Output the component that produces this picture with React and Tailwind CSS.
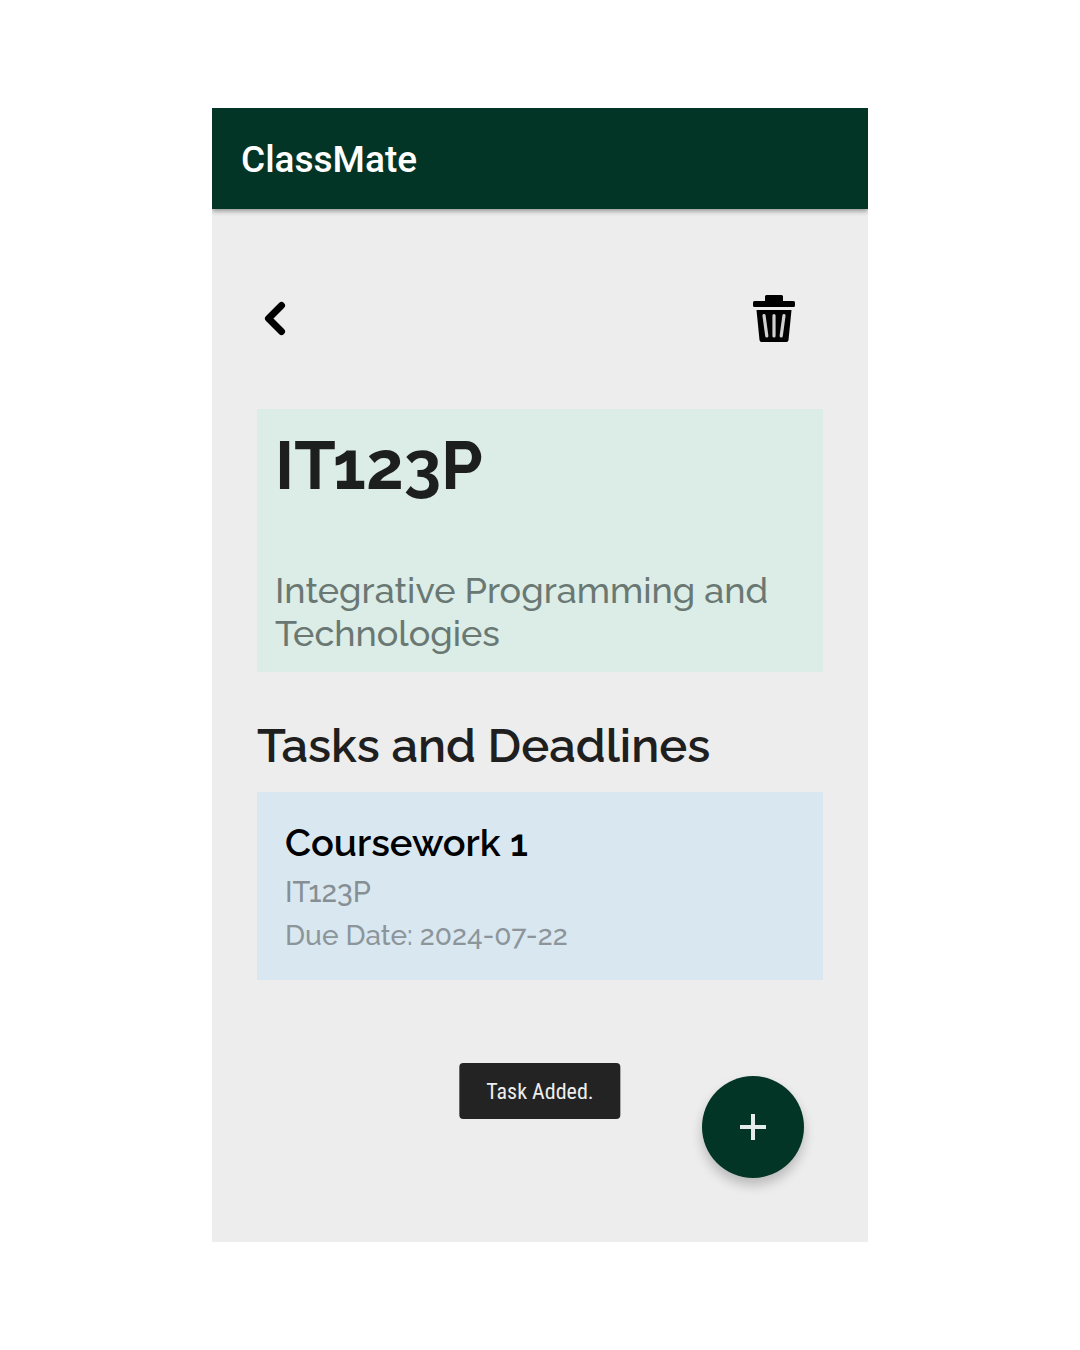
const tasks = [
  { title: "Coursework 1", course: "IT123P", due: "2024-07-22" },
];

function BackIcon() {
  return (
    <svg viewBox="0 0 24 36" className="h-9 w-6" fill="none" aria-hidden="true">
      <path d="M18.500 5.500 5.500 18.500 18.500 31.500" stroke="#000" strokeWidth="7" strokeLinecap="round" strokeLinejoin="round" />
    </svg>
  );
}

function TrashIcon() {
  return (
    <svg viewBox="0 0 44 50" className="h-[50px] w-11" aria-hidden="true">
      <path d="M13 3.500q0-1.500 1.500-1.500h15q1.500 0 1.500 1.500V8h10.500q1.500 0 1.500 1.500v3q0 1.500-1.500 1.500h-39Q1 14 1 12.500v-3Q1 8 2.500 8H13z" fill="#000" />
      <path d="M4.500 17h35L36.500 47q-.2 2-2 2h-25q-1.800 0-2-2z" fill="#000" />
      <path d="M12 22.500 14.800 43M22 22.500V43M32 22.500 29.200 43" stroke="#d0d0d0" strokeWidth="3.200" strokeLinecap="round" fill="none" />
    </svg>
  );
}

function PlusIcon() {
  return (
    <svg viewBox="0 0 28 28" className="size-7" aria-hidden="true">
      <path d="M14 1v26M1 14h26" stroke="#e6ece9" strokeWidth="4" fill="none" />
    </svg>
  );
}

export default function App() {
  return (
    <div className="flex min-h-screen flex-col bg-white py-27 font-['Raleway','Lato',sans-serif]">
      <div className="relative mx-auto flex w-full max-w-[656px] flex-1 flex-col overflow-hidden bg-[#ededed]">
        <header className="bg-[#033526] px-[29px] pt-[31px] pb-[29px] shadow-[0_2px_5px_rgba(0,0,0,0.4)]">
          <h1 className="font-['Roboto',sans-serif] text-[37px] leading-[41px] font-medium text-white">ClassMate</h1>
        </header>

        <main className="flex flex-col px-[45px] pt-[84px]">
          <div className="flex items-center justify-between pr-[27px] pl-1.5">
            <button type="button" aria-label="Back"><BackIcon /></button>
            <button type="button" aria-label="Delete course"><TrashIcon /></button>
          </div>

          <section className="mt-[66px] bg-[#dcece6] px-[18px] py-[17px]">
            <h2 className="text-[67px] leading-[80px] font-bold text-[#1c1f1e]">IT123P</h2>
            <p className="mt-[63px] text-[36px] leading-[43px] font-medium text-[#6a7873]">
              Integrative Programming and Technologies
            </p>
          </section>

          <h2 className="mt-11 text-[47px] leading-[60px] font-semibold text-[#1f1f1f]">Tasks and Deadlines</h2>

          <ul className="mt-4 flex flex-col gap-4">
            {tasks.map((task) => (
              <li key={task.title} className="bg-[#d9e7f0] px-7 pt-[26px] pb-[22px]">
                <h3 className="text-[38px] leading-[50px] font-semibold text-black">{task.title}</h3>
                <p className="mt-0.5 text-[29px] leading-[44px] font-medium text-[#868f94]">{task.course}</p>
                <p className="text-[28px] leading-[44px] font-medium text-[#8c959a]">Due Date: {task.due}</p>
              </li>
            ))}
          </ul>
        </main>

        <div role="status" className="absolute bottom-[123px] left-1/2 flex -translate-x-1/2 items-center justify-center rounded bg-[#232323] px-[27px] pt-[13px] pb-[11px] font-['Roboto_Condensed','Roboto',sans-serif] text-[22px] leading-8 text-[#ededed]">
          Task Added.
        </div>

        <button type="button" aria-label="Add task" className="absolute right-16 bottom-16 flex size-[102px] items-center justify-center rounded-full bg-[#033526] shadow-[0_7px_12px_rgba(0,0,0,0.22)]">
          <PlusIcon />
        </button>
      </div>
    </div>
  );
}
